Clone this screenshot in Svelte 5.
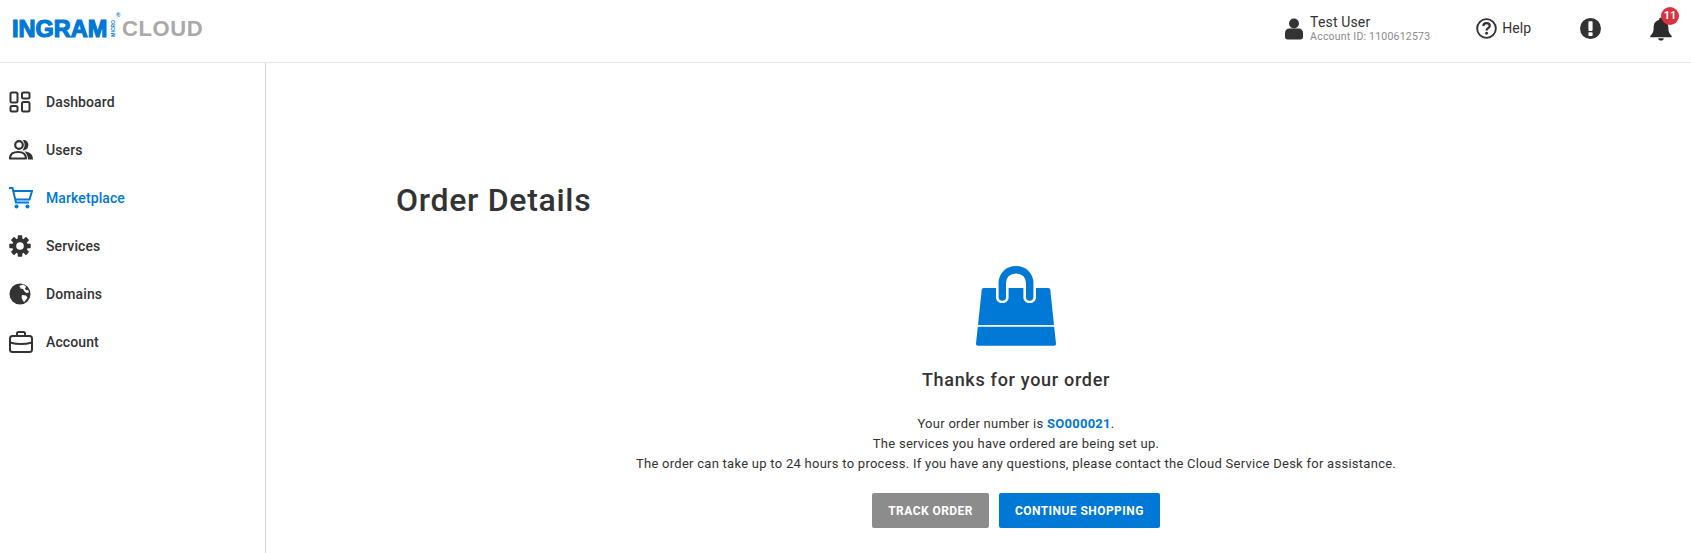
<script>
  const navItems = [
    { label: "Dashboard", icon: "dashboard" },
    { label: "Users", icon: "users" },
    { label: "Marketplace", icon: "cart", active: true },
    { label: "Services", icon: "gear" },
    { label: "Domains", icon: "globe" },
    { label: "Account", icon: "case" }
  ];

  // teeth of the services gear
  const teeth = [0, 45, 90, 135, 180, 225, 270, 315];
</script>

<div class="page">
  <header class="topbar">
    <div class="logo">
      <span class="logo-ingram">INGRAM</span>
      <span class="logo-micro">MICRO</span>
      <span class="logo-reg">®</span>
      <span class="logo-cloud">CLOUD</span>
    </div>

    <div class="user">
      <svg class="user-icon" viewBox="0 0 18 22" aria-hidden="true">
        <circle cx="9" cy="5.5" r="5" fill="#333" />
        <path d="M0 15c0-3 2-4.5 4-4.500h10c2 0 4 1.500 4 4.500v4c0 1.500-1 2.500-2.500 2.500h-13C1 21.500 0 20.500 0 19z" fill="#333" />
      </svg>
      <div class="user-text">
        <div class="user-name">Test User</div>
        <div class="user-id">Account ID: 1100612573</div>
      </div>
    </div>

    <div class="help">
      <svg viewBox="0 0 22 22" width="21" height="21" aria-hidden="true">
        <circle cx="11" cy="11" r="9.800" fill="none" stroke="#333" stroke-width="2" />
        <path d="M7.700 8.500c0-2 1.500-3.200 3.400-3.200 2 0 3.300 1.200 3.300 2.800 0 2.500-3.300 2.500-3.300 4.900" fill="none" stroke="#333" stroke-width="2.300" />
        <circle cx="11.100" cy="16" r="1.500" fill="#333" />
      </svg>
      <span>Help</span>
    </div>

    <svg class="alert" viewBox="0 0 22 22" width="21" height="21" aria-hidden="true">
      <circle cx="11" cy="11" r="11" fill="#333" />
      <rect x="8.800" y="3.500" width="4.400" height="10" rx="0.800" fill="#fff" />
      <rect x="8.800" y="15" width="4.400" height="3.800" rx="0.800" fill="#fff" />
    </svg>

    <div class="bell">
      <svg viewBox="0 0 24 26" width="22" height="25" aria-hidden="true">
        <path d="M12 1c1 0 2 .8 2 2v.800c4 .8 6 4 6 8 0 5 1.500 7 3.500 9 .5.600.2 1.700-.8 1.700H1.300c-1 0-1.300-1.100-.8-1.700 2-2 3.500-4 3.500-9 0-4 2-7.200 6-8V3c0-1.200 1-2 2-2z" fill="#2b2b2b" />
        <path d="M9 23.500h6a3 2.500 0 0 1-6 0z" fill="#2b2b2b" />
      </svg>
      <span class="badge">11</span>
    </div>
  </header>

  <div class="body">
    <nav class="sidebar">
      {#each navItems as item}
        <div class="nav-item" class:active={item.active}>
          <span class="nav-icon">
            {#if item.icon === "dashboard"}
              <svg viewBox="0 0 22 22" width="22" height="22" fill="none" stroke="currentColor" stroke-width="2">
                <rect x="1.500" y="1.500" width="7" height="10" rx="1.500" />
                <rect x="13" y="1.500" width="7.500" height="6" rx="1.500" />
                <rect x="1.500" y="15" width="7" height="5.500" rx="1.500" />
                <rect x="13" y="11" width="7.500" height="9.500" rx="1.500" />
              </svg>
            {:else if item.icon === "users"}
              <svg viewBox="0 0 24 20" width="24" height="20">
                <circle cx="10" cy="5" r="3.800" fill="none" stroke="currentColor" stroke-width="2.200" />
                <path d="M15 .6a4.500 4.500 0 0 1 0 8.800c1.600-2.500 1.600-6.200 0-8.800z" fill="currentColor" stroke="currentColor" stroke-width="1.500" />
                <path d="M1 18.500c0-4.500 3.500-6.500 8-6.500s8 2 8 6.500z" fill="none" stroke="currentColor" stroke-width="2.200" stroke-linejoin="round" />
                <path d="M15.500 11.500c4 0 8.500 2 8.500 8h-5c0-3.500-1.500-6-3.500-8z" fill="currentColor" />
              </svg>
            {:else if item.icon === "cart"}
              <svg viewBox="0 0 24 22" width="24" height="22" fill="none" stroke="currentColor" stroke-width="2">
                <path d="M0 1h3.500l3.500 14.500h13" />
                <path d="M4.500 4h18.500l-2.500 8.500H6.500" />
                <circle cx="7.500" cy="19.500" r="2" fill="currentColor" stroke="none" />
                <circle cx="18.500" cy="19.500" r="2" fill="currentColor" stroke="none" />
              </svg>
            {:else if item.icon === "gear"}
              <svg viewBox="0 0 22 22" width="22" height="22">
                {#each teeth as angle}
                  <rect x="8.700" y="0.300" width="4.600" height="5" rx="0.800" fill="currentColor" transform="rotate({angle} 11 11)" />
                {/each}
                <circle cx="11" cy="11" r="5.800" fill="none" stroke="currentColor" stroke-width="4" />
              </svg>
            {:else if item.icon === "globe"}
              <svg viewBox="0 0 22 22" width="22" height="22">
                <circle cx="11" cy="11" r="10.500" fill="currentColor" />
                <path d="M10 3l4-1.500 3 2-1 2.500 2 1.500 1-1 1 3-2.500.5-2-1.500-1.500-2.500-2.500-.5-.5-1.500zM13 12l4 .5 1.500 2-3 4.500-1.500-1-1.500-3.500z" fill="#fff" />
              </svg>
            {:else}
              <svg viewBox="0 0 24 22" width="24" height="22" fill="none" stroke="currentColor" stroke-width="2">
                <path d="M8 5V2.500c0-.8.700-1.500 1.500-1.500h5c.8 0 1.500.7 1.500 1.500V5" />
                <rect x="1" y="5" width="22" height="16" rx="2.500" />
                <path d="M1 11.500c7 2 15 2 22 0" />
              </svg>
            {/if}
          </span>
          <span class="nav-label">{item.label}</span>
        </div>
      {/each}
    </nav>

    <main class="content">
      <h1>Order Details</h1>

      <section class="confirm">
        <svg class="bag" viewBox="0 0 80 80" width="80" height="80" aria-hidden="true">
          <path d="M26.300 31V17c0-8 6-13.300 13.700-13.300S53.700 9 53.700 17v14" fill="none" stroke="#0078d6" stroke-width="7.400" stroke-linecap="round" />
          <path d="M2 59 5.700 24c.1-1.200 1-2 2-2H20v9.500c0 3.500 2.800 5.500 6.300 5.500s6.300-2 6.300-5.500V22h14.800v9.500c0 3.500 2.800 5.500 6.300 5.500s6.300-2 6.300-5.500V22h12.300c1 0 1.900.8 2 2L78 59z" fill="#0078d6" />
          <path d="M1.800 60.700h76.400L80 77.500c.1 1.300-.8 2.200-2 2.200H2c-1.200 0-2.100-.9-2-2.200z" fill="#0078d6" />
        </svg>
        <h2>Thanks for your order</h2>
        <p class="order-no">Your order number is <strong>SO000021</strong>.</p>
        <p>The services you have ordered are being set up.</p>
        <p>The order can take up to 24 hours to process. If you have any questions, please contact the Cloud Service Desk for assistance.</p>
        <div class="actions">
          <button class="track">TRACK ORDER</button>
          <button class="shop">CONTINUE SHOPPING</button>
        </div>
      </section>
    </main>
  </div>
</div>

<style>
  :global(body) {
    margin: 0;
    background: #fff;
  }
  .page {
    width: 1691px;
    height: 553px;
    overflow: hidden;
    font-family: Roboto, "Liberation Sans", sans-serif;
    color: #333;
    display: flex;
    flex-direction: column;
  }
  .topbar {
    height: 63px;
    box-sizing: border-box;
    flex: none;
    border-bottom: 1px solid #e8e8e8;
    display: flex;
    align-items: center;
    padding: 0 19px 6px 12px;
  }
  .logo {
    position: relative;
    display: flex;
    align-items: center;
    font-family: "Liberation Sans", sans-serif;
    font-weight: 700;
    margin-top: 1px;
  }
  .logo-ingram {
    color: #0078d6;
    font-size: 23.500px;
    -webkit-text-stroke: 1.200px #0078d6;
    width: 98px;
    margin-top: 2px;
  }
  .logo-micro {
    color: #0078d6;
    font-size: 5px;
    writing-mode: vertical-rl;
    transform: rotate(180deg);
    width: 6px;
  }
  .logo-reg {
    position: absolute;
    left: 104px;
    top: -2px;
    color: #0078d6;
    font-size: 6px;
  }
  .logo-cloud {
    color: #a9a9a9;
    font-size: 22px;
    letter-spacing: 0.600px;
    margin-left: 6px;
  }
  .user {
    margin-left: auto;
    display: flex;
    align-items: center;
    gap: 7px;
  }
  .user-icon {
    width: 18px;
    height: 22px;
    margin-top: 1px;
  }
  .user-text {
    margin-top: 1px;
  }
  .user-name {
    font-size: 14px;
    line-height: 16px;
    letter-spacing: 0.150px;
  }
  .user-id {
    font-size: 10.500px;
    line-height: 13px;
    letter-spacing: 0.220px;
    color: #8a8a8a;
  }
  .help {
    margin-left: 46px;
    display: flex;
    align-items: center;
    gap: 5px;
    font-size: 14px;
  }
  .alert {
    margin-left: 49px;
  }
  .bell {
    position: relative;
    margin-left: 49px;
    height: 25px;
    margin-top: 1px;
  }
  .bell svg {
    display: block;
  }
  .badge {
    position: absolute;
    left: 11px;
    top: -9px;
    width: 18px;
    height: 18px;
    border-radius: 50%;
    background: #d9333f;
    color: #fff;
    font-size: 11px;
    font-weight: 700;
    line-height: 18px;
    text-align: center;
  }
  .body {
    flex: 1;
    display: flex;
    min-height: 0;
  }
  .sidebar {
    width: 265px;
    flex: none;
    border-right: 1px solid #d4d4d4;
    padding-top: 15px;
  }
  .nav-item {
    height: 48px;
    display: flex;
    align-items: center;
    color: #333;
  }
  .nav-item.active {
    color: #0078d6;
  }
  .nav-icon {
    width: 46px;
    padding-left: 9px;
    box-sizing: border-box;
    display: flex;
    flex: none;
  }
  .nav-label {
    font-size: 14px;
    font-weight: 500;
    letter-spacing: 0.100px;
  }
  .content {
    flex: 1;
    padding: 0 130px;
    min-width: 0;
  }
  h1 {
    margin: 117px 0 0;
    font-size: 32px;
    line-height: 40px;
    font-weight: 500;
    letter-spacing: 0.700px;
  }
  .confirm {
    display: flex;
    flex-direction: column;
    align-items: center;
    width: 1240px;
    margin-top: 46px;
    font-size: 13px;
    letter-spacing: 0.270px;
  }
  .bag {
    display: block;
  }
  h2 {
    margin: 22px 0 22px;
    font-size: 18px;
    line-height: 24px;
    font-weight: 500;
    letter-spacing: 0.700px;
  }
  p {
    margin: 0;
    line-height: 20px;
  }
  strong {
    color: #0078d6;
    font-weight: 700;
  }
  .actions {
    display: flex;
    gap: 10px;
    margin-top: 19px;
  }
  button {
    height: 35px;
    border: none;
    border-radius: 2px;
    color: #fff;
    font-family: inherit;
    font-size: 12px;
    font-weight: 700;
    letter-spacing: 0.450px;
    padding: 0 16px;
  }
  .track {
    background: #8c8c8c;
  }
  .shop {
    background: #0078d6;
  }
</style>
